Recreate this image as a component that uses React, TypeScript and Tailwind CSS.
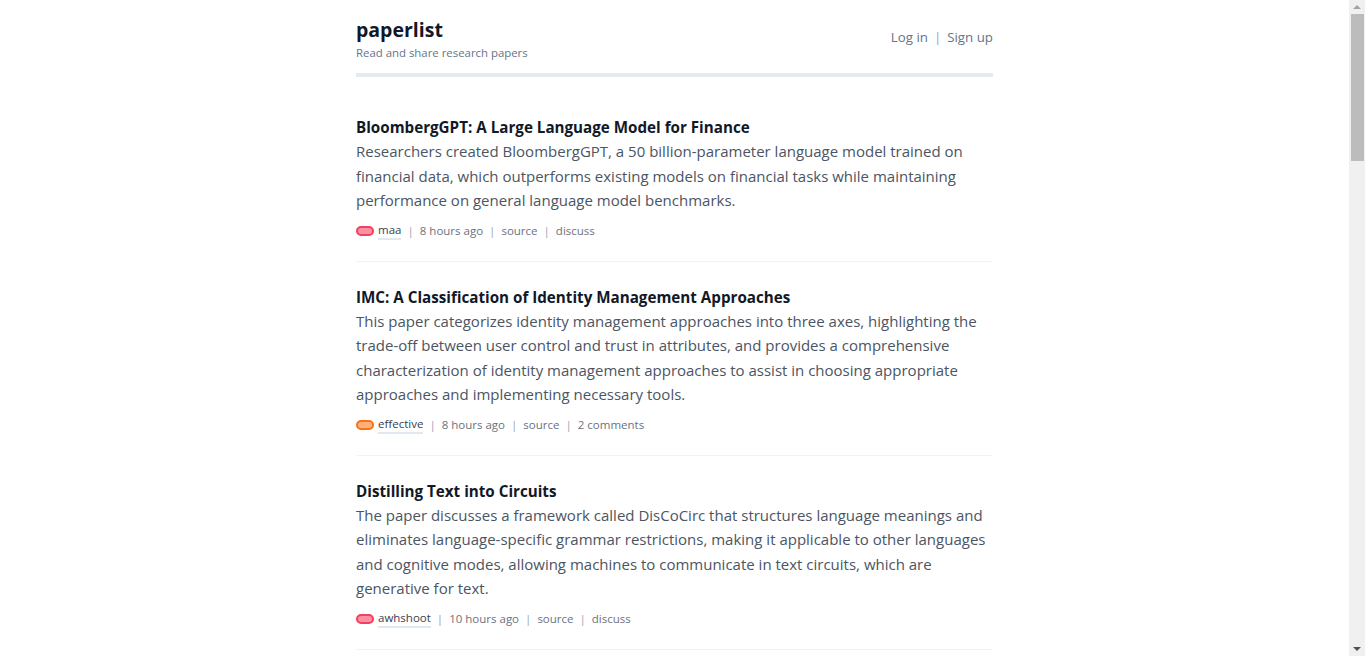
import React from "react";

type Item = {
  title: string;
  desc: string;
  user: string;
  badge: "pink" | "orange";
  time: string;
  last: string;
};

const items: Item[] = [
  {
    title: "BloombergGPT: A Large Language Model for Finance",
    desc: "Researchers created BloombergGPT, a 50 billion-parameter language model trained on financial data, which outperforms existing models on financial tasks while maintaining performance on general language model benchmarks.",
    user: "maa",
    badge: "pink",
    time: "8 hours ago",
    last: "discuss",
  },
  {
    title: "IMC: A Classification of Identity Management Approaches",
    desc: "This paper categorizes identity management approaches into three axes, highlighting the trade-off between user control and trust in attributes, and provides a comprehensive characterization of identity management approaches to assist in choosing appropriate approaches and implementing necessary tools.",
    user: "effective",
    badge: "orange",
    time: "8 hours ago",
    last: "2 comments",
  },
  {
    title: "Distilling Text into Circuits",
    desc: "The paper discusses a framework called DisCoCirc that structures language meanings and eliminates language-specific grammar restrictions, making it applicable to other languages and cognitive modes, allowing machines to communicate in text circuits, which are generative for text.",
    user: "awhshoot",
    badge: "pink",
    time: "10 hours ago",
    last: "discuss",
  },
];

function Sep() {
  return <span className="mx-[6px] text-[#94a3b8]">|</span>;
}

function Scrollbar() {
  return (
    <div className="flex h-screen w-[16px] shrink-0 flex-col items-center bg-[#f0f0f0]">
      <div className="flex h-[14px] w-full items-center justify-center">
        <svg width="8" height="4" viewBox="0 0 8 4">
          <path d="M0 4 L4 0 L8 4 Z" fill="#a3a3a3" />
        </svg>
      </div>
      <div className="h-[147px] w-[13px] bg-[#bcbcbc]" />
      <div className="flex-1" />
      <div className="flex h-[14px] w-full items-center justify-center">
        <svg width="8" height="4" viewBox="0 0 8 4">
          <path d="M0 0 L8 0 L4 4 Z" fill="#505050" />
        </svg>
      </div>
    </div>
  );
}

export default function App() {
  return (
    <div
      className="flex h-screen overflow-hidden bg-white"
      style={{ fontFamily: '"Open Sans", sans-serif' }}
    >
      <div className="min-w-0 flex-1 overflow-hidden">
        <div className="mx-auto w-[637px]">
          <header className="flex items-end justify-between border-b-4 border-[#e5e9f2] pt-[17px] pb-[12px]">
            <div>
              <div className="text-[19.5px] font-bold leading-[26px] text-[#111827]">paperlist</div>
              <div className="mt-[2px] text-[11.4px] leading-[16px] text-[#64748b]">Read and share research papers</div>
            </div>
            <div className="mb-[13px] text-[13.3px] text-[#64748b]">
              <span>Log in</span>
              <span className="mx-[6px] text-[#94a3b8]">|</span>
              <span>Sign up</span>
            </div>
          </header>
          <main className="pt-[15px]">
            {items.map((it, i) => (
              <article key={i} className="border-b border-[#f1f3f6] pt-[23px] pb-[21px]">
                <h2 className="text-[15.2px] font-bold leading-[24px] text-[#111827]">{it.title}</h2>
                <p className="text-[15px] leading-[24.5px] text-[#4b5563]">{it.desc}</p>
                <div className="mt-[9px] flex items-center text-[11.5px] leading-[18px] text-[#6b7280]">
                  <span
                    className={
                      it.badge === "pink"
                        ? "mr-[4px] inline-block h-[10px] w-[18px] rounded-full border-2 border-[#f43f5e] bg-[#fb8fa3]"
                        : "mr-[4px] inline-block h-[10px] w-[18px] rounded-full border-2 border-[#f97316] bg-[#fdb07a]"
                    }
                  />
                  <span className="border-b-2 border-[#e2e8f0] leading-[16px] text-[#374151]">{it.user}</span>
                  <Sep />
                  <span>{it.time}</span>
                  <Sep />
                  <span>source</span>
                  <Sep />
                  <span>{it.last}</span>
                </div>
              </article>
            ))}
          </main>
        </div>
      </div>
      <Scrollbar />
    </div>
  );
}
